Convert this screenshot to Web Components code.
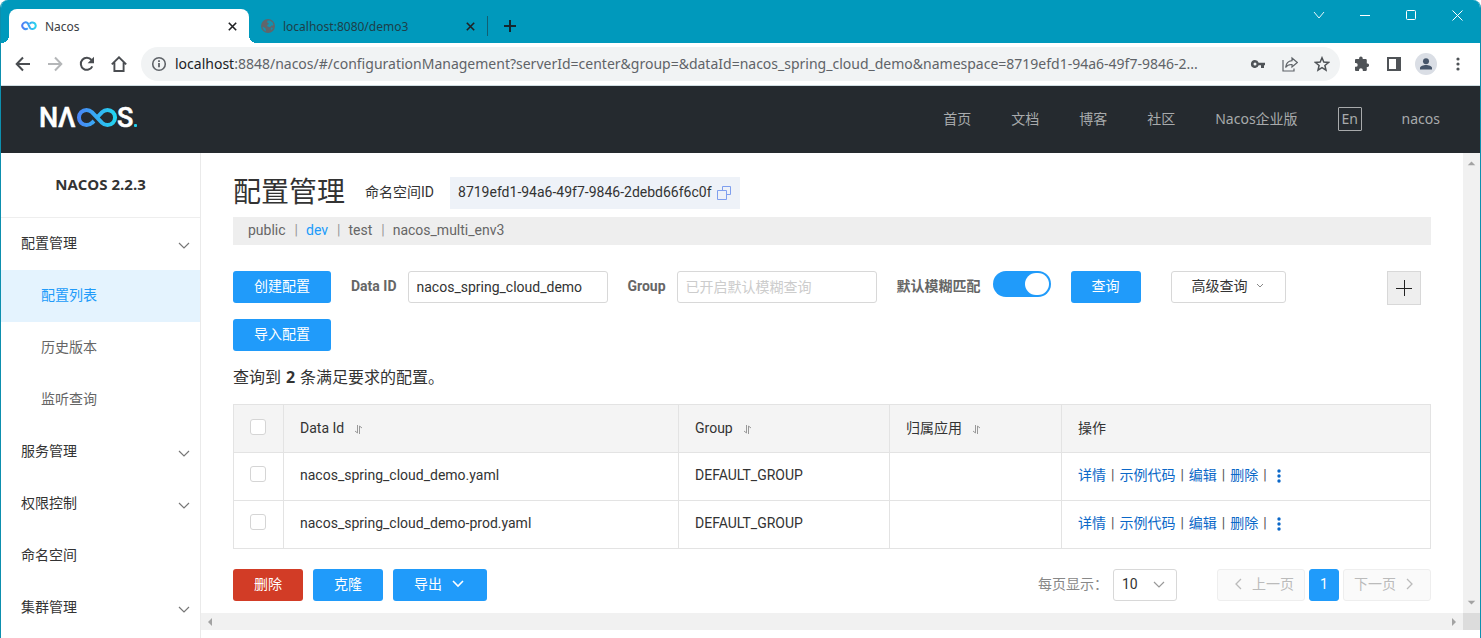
<!DOCTYPE html>
<html lang="zh-CN">
<head>
<meta charset="utf-8">
<meta name="viewport" content="width=device-width, initial-scale=1">
<title>Nacos</title>
<style>
  html, body { margin: 0; }
  body { font-family: Roboto, "Noto Sans CJK SC", sans-serif; font-size: 14px; line-height: 20px; color: #333; }
</style>
</head>
<body>
<browser-window></browser-window>

<script>
const RESET = `*, *::before, *::after { box-sizing: border-box; }
  svg { display: block; flex: none; }
  button, input, select { font: inherit; color: inherit; margin: 0; }
  a { color: inherit; text-decoration: none; }
  [hidden] { display: none; }`;

function define(name, css, html, setup) {
  const template = document.createElement('template');
  template.innerHTML = `<style>${RESET}${css}</style>${html}`;
  customElements.define(name, class extends HTMLElement {
    constructor() {
      super();
      this.attachShadow({ mode: 'open' }).append(template.content.cloneNode(true));
    }
    connectedCallback() {
      if (setup && !this.ready) { this.ready = true; setup(this, this.shadowRoot); }
    }
  });
}

/* ---------- browser frame ---------- */

define('browser-tab', `
  :host { display: flex; align-items: center; height: 34px; padding: 0 12px; color: #1d3f49; font-size: 12px; }
  :host([active]) { background: #fff; border-radius: 8px 8px 0 0; color: #3c4043; }
  :host([active])::before, :host([active])::after { content: ""; width: 8px; height: 8px; align-self: flex-end; flex: none; }
  :host([active])::before { margin-left: -20px; margin-right: 12px; background: radial-gradient(circle at 0 0, transparent 8px, #fff 8px); }
  :host([active])::after { margin-right: -20px; margin-left: 12px; background: radial-gradient(circle at 100% 0, transparent 8px, #fff 8px); }
  .title { flex: 1; margin-left: 8px; padding-top: 2px; white-space: nowrap; }
  button { display: flex; border: 0; padding: 0; background: none; }
`, `
  <slot name="icon"></slot>
  <span class="title"><slot></slot></span>
  <button aria-label="关闭标签页"><svg width="9" height="9" viewBox="0 0 9 9" fill="none" stroke="#202124" stroke-width="1.6"><path d="M.8.8l7.4 7.4M8.2.8L.8 8.2"/></svg></button>
`);

define('tab-strip', `
  :host { display: flex; height: 43px; padding-left: 8px; background: #0099bc; }
  .tabs { display: flex; align-items: flex-end; flex: 1; }
  browser-tab { width: 240px; }
  browser-tab:nth-of-type(2) { width: 238px; }
  .new { height: 34px; display: flex; align-items: center; }
  .new::before { content: ""; width: 1px; height: 20px; background: #125f72; }
  .new button { display: flex; padding: 0 16px; }
  button { border: 0; background: none; }
  .controls { display: flex; height: 30px; }
  .controls button { width: 46px; display: flex; align-items: center; justify-content: center; padding: 0; }
`, `
  <div class="tabs">
    <browser-tab active>
      <svg slot="icon" width="16" height="16" viewBox="0 0 16 16" fill="none" stroke="url(#g)" stroke-width="2"><defs><linearGradient id="g"><stop stop-color="#4d7df5"/><stop offset="1" stop-color="#29d3ee"/></linearGradient></defs><path d="M6.8 10.2A3.3 3.3 0 1 1 6.8 5.2L9.2 10.2M8.7 5.9A3.3 3.3 0 1 1 9.2 10.2"/></svg>
      Nacos
    </browser-tab>
    <browser-tab>
      <svg slot="icon" width="14" height="14" viewBox="0 0 14 14"><circle cx="7" cy="7" r="7" fill="#60656b"/><path fill="#1292b0" d="M1.600 7.400l3 2.200.3 2.800A6 6 0 0 1 1.500 7zM6.500 1.600l2.400-.2 2.800 2.200.8 2.600-2.300.5-1.200 1.600-2.500-.7-.4-1.700 2-1.200-1.900-1.300zM10 8.500l1.900.5-1.700 2.500z"/></svg>
      localhost:8080/demo3
    </browser-tab>
    <div class="new"><button aria-label="新标签页"><svg width="12" height="12" viewBox="0 0 12 12" stroke="#15272e" stroke-width="2"><path d="M6 0v12M0 6h12"/></svg></button></div>
  </div>
  <div class="controls">
    <button aria-label="搜索标签页"><svg width="12" height="12" viewBox="0 0 12 12" fill="none" stroke="#e8f7fa"><path d="M1 3l5 6 5-6"/></svg></button>
    <button aria-label="最小化"><svg width="10" height="10" viewBox="0 0 10 10" stroke="#fff"><path d="M0 5.500h10"/></svg></button>
    <button aria-label="最大化"><svg width="10" height="10" viewBox="0 0 10 10" fill="none" stroke="#fff"><rect x=".5" y=".5" width="9" height="9" rx="1"/></svg></button>
    <button aria-label="关闭"><svg width="11" height="11" viewBox="0 0 11 11" stroke="#fff"><path d="M.5.5l10 10M10.500.5l-10 10"/></svg></button>
  </div>
`);

define('browser-toolbar', `
  :host { display: flex; align-items: center; height: 43px; padding: 0 14px; background: #fff; border-bottom: 1px solid #cfdde2; color: #5f6368; }
  button { display: flex; padding: 0; border: 0; background: none; align-items: center; justify-content: center; width: 16px; height: 24px; flex: none; }
  .nav { display: flex; gap: 16px; margin-right: 14px; }
  .pill { flex: 1; min-width: 0; display: flex; align-items: center; height: 34px; padding: 0 10px; gap: 16px; border-radius: 17px; background: #f1f3f4; }
  .url { flex: 1; min-width: 0; margin-left: -8px; font-size: 14px; line-height: 20px; white-space: nowrap; overflow: hidden; outline: 0; }
  .url b { font-weight: 400; color: #202124; }
  .tools { display: flex; align-items: center; gap: 16px; margin-left: 14px; }
  .avatar { width: 22px; height: 22px; border-radius: 50%; background: #dadee5; margin: 0 -3px; }
`, `
  <div class="nav">
    <button aria-label="后退"><svg width="16" height="16" viewBox="0 0 16 16" fill="none" stroke="#4a4d51" stroke-width="2"><path d="M15 8H2M8 1.500L1.700 8 8 14.500"/></svg></button>
    <button aria-label="前进"><svg width="16" height="16" viewBox="0 0 16 16" fill="none" stroke="#b4b6b8" stroke-width="2"><path d="M1 8h13M8 1.500L14.300 8 8 14.500"/></svg></button>
    <button aria-label="重新加载"><svg width="16" height="16" viewBox="0 0 16 16"><path d="M13.300 10.300A6 6 0 1 1 12.500 4" fill="none" stroke="#4a4d51" stroke-width="2"/><path fill="#4a4d51" d="M15 .8v6.400H8.600z"/></svg></button>
    <button aria-label="主页"><svg width="16" height="16" viewBox="0 0 16 16" fill="none" stroke="#4a4d51" stroke-width="1.900"><path d="M.8 8.400L8 1.300l7.200 7.100M3.400 6.500V15h9.200V6.500"/></svg></button>
  </div>
  <div class="pill">
    <svg width="16" height="16" viewBox="0 0 16 16" fill="none" stroke="#5f6368" stroke-width="1.600"><circle cx="8" cy="8" r="6.300"/><path d="M8 7v4.300M8 4.300v1.700" stroke-width="1.800"/></svg>
    <div class="url" role="textbox" contenteditable="true" spellcheck="false" aria-label="地址"><b>localhost</b>:8848/nacos/#/configurationManagement?serverId=center&amp;group=&amp;dataId=nacos_spring_cloud_demo&amp;namespace=8719efd1-94a6-49f7-9846-2...</div>
    <button aria-label="密码"><svg width="16" height="16" viewBox="0 0 16 16"><path fill="#4f5357" fill-rule="evenodd" d="M5 4a4 4 0 1 0 3.700 5.300H11V12h3V9.300h1V6.700H8.700A4 4 0 0 0 5 4zm0 2.500a1.500 1.500 0 1 1 0 3 1.500 1.500 0 0 1 0-3z"/></svg></button>
    <button aria-label="分享"><svg width="16" height="16" viewBox="0 0 16 16" fill="none" stroke="#5f6368" stroke-width="1.200"><path d="M1 4v11h11v-2.500M10 2l5.300 4.500L10 11V8.500C7 8.300 5.200 9 3.600 11.500 4 7.500 6 5 10 4.600z"/></svg></button>
    <button aria-label="收藏"><svg width="16" height="16" viewBox="0 0 16 16" fill="none" stroke="#4f5357" stroke-width="1.500"><path d="M8 1.800l1.800 4.300 4.700.4-3.600 3 1.100 4.600L8 11.700l-4 2.400 1.100-4.600-3.600-3 4.700-.4z"/></svg></button>
  </div>
  <div class="tools">
    <button aria-label="扩展程序"><svg width="16" height="16" viewBox="0 0 16 16" fill="#4f5357"><path d="M13.700 7.500h-.9V4.300c0-.8-.6-1.300-1.300-1.300H8.700v-.8a1.800 1.800 0 0 0-3.600 0V3H2.200C1.500 3 1 3.500 1 4.300V7h.8a1.900 1.900 0 0 1 0 3.800H1v2.900c0 .7.500 1.300 1.200 1.300H5v-.9a1.900 1.900 0 0 1 3.800 0v.9h2.700c.7 0 1.300-.6 1.300-1.300V11h.9a1.800 1.800 0 0 0 0-3.500z"/></svg></button>
    <button aria-label="侧边栏"><svg width="14" height="14" viewBox="0 0 14 14"><path fill="#4f5357" fill-rule="evenodd" d="M0 0h14v14H0zM2 2v10h7V2z"/></svg></button>
    <button class="avatar" aria-label="个人资料"><svg width="14" height="14" viewBox="0 0 14 14" fill="#46556a"><circle cx="7" cy="4.200" r="3"/><path d="M1 12.500V11c0-2 3.500-3 6-3s6 1 6 3v1.500z"/></svg></button>
    <button aria-label="菜单"><svg width="4" height="14" viewBox="0 0 4 14" fill="#4f5357"><circle cx="2" cy="2" r="1.600"/><circle cx="2" cy="7" r="1.600"/><circle cx="2" cy="12" r="1.600"/></svg></button>
  </div>
`);

define('scroll-bar', `
  :host { display: flex; flex: none; justify-content: space-between; align-items: center; background: #f1f1f1; color: #a3a3a3; padding: 0 6px; height: 17px; }
  :host([vertical]) { flex-direction: column; width: 17px; height: auto; padding: 6px 0; }
  :host([vertical]) svg { transform: rotate(90deg); }
`, `
  <svg width="5" height="8" viewBox="0 0 5 8" fill="currentColor"><path d="M5 0v8L1 4z"/></svg>
  <svg width="5" height="8" viewBox="0 0 5 8" fill="currentColor"><path d="M0 0v8l4-4z"/></svg>
`);

/* ---------- console ---------- */

define('nacos-logo', `
  :host { display: block; }
  text { font: 500 27px Roboto, sans-serif; fill: #fff; stroke: #fff; stroke-width: .5px; }
`, `
  <svg width="108" height="35" viewBox="0 0 108 35" role="img" aria-label="Nacos">
    <defs><linearGradient id="loop" gradientUnits="userSpaceOnUse" x1="41" y1="0" x2="81" y2="0"><stop stop-color="#4b83f6"/><stop offset="1" stop-color="#20d8f0"/></linearGradient></defs>
    <text x="3" y="25">N</text><text x="22" y="25">Λ</text><text x="81" y="25">S</text>
    <path d="M58 19L55.900 20.900A7.600 7.600 0 1 1 55.900 10.100L66.100 20.900A7.600 7.600 0 1 0 66.100 10.100L61.500 15" fill="none" stroke="url(#loop)" stroke-width="4"/>
    <rect x="98" y="22" width="3" height="3" rx="1" fill="#20d0ee"/>
  </svg>
`);

define('site-header', `
  :host { display: flex; align-items: center; justify-content: space-between; height: 67px; padding: 0 40px 0 35px; background: #252a2f; color: #a8aaac; font-family: "Noto Sans", "Noto Sans CJK SC", sans-serif; }
  nav { display: flex; align-items: center; gap: 40px; padding-bottom: 2px; }
  button { width: 24px; height: 24px; padding: 0; line-height: 20px; border: 1px solid #a8aaac; border-radius: 1px; background: none; color: inherit; }
`, `
  <nacos-logo></nacos-logo>
  <nav>
    <a href="#home">首页</a><a href="#docs">文档</a><a href="#blog">博客</a><a href="#community">社区</a><a href="#enterprise">Nacos企业版</a>
    <button>En</button>
    <a href="#user">nacos</a>
  </nav>
`);

define('menu-item', `
  :host { display: block; }
  a { display: flex; align-items: center; justify-content: space-between; height: 52px; padding: 0 10px 2px 20px; }
  :host([sub]) a { padding-left: 40px; color: #666; }
  :host([selected]) a { background: #e4f3fe; color: #209bfa; }
  svg { display: none; margin-top: 6px; }
  :host([expandable]) svg { display: block; }
`, `
  <a href="#menu"><span><slot></slot></span><svg width="12" height="8" viewBox="0 0 12 8" fill="none" stroke="#777" stroke-width="1.200"><path d="M1 1l5 5 5-5"/></svg></a>
`);

define('side-menu', `
  :host { display: block; width: 200px; flex: none; border-right: 1px solid #eaeaea; background: #fff; }
  h1 { margin: 0; height: 65px; border-bottom: 1px solid #eee; font: 700 15px/62px "Open Sans", sans-serif; text-align: center; }
`, `
  <h1>NACOS 2.2.3</h1>
  <menu-item expandable>配置管理</menu-item>
  <menu-item sub selected>配置列表</menu-item>
  <menu-item sub>历史版本</menu-item>
  <menu-item sub>监听查询</menu-item>
  <menu-item expandable>服务管理</menu-item>
  <menu-item expandable>权限控制</menu-item>
  <menu-item>命名空间</menu-item>
  <menu-item expandable>集群管理</menu-item>
`);

define('ui-button', `
  :host { display: block; }
  button { display: flex; align-items: center; justify-content: center; gap: 10px; height: 32px; padding: 0 20px 2px; border: 1px solid #209bfa; border-radius: 3px; background: #209bfa; color: #fff; white-space: nowrap; }
  :host(:not([kind])) button, :host([kind=danger]) button { border: 0; padding: 0 21px 2px; }
  :host([kind=danger]) button { background: #d23c26; }
  :host([kind=plain]) button { background: #fff; border-color: #d8d8d8; color: #333; gap: 8px; padding: 0 21px 2px 20px; }
  :host([kind=pager]) button { background: #fafafa; border-color: #eee; color: #bbb; padding: 0 10px 2px 16px; }
  :host([kind=pager]:last-of-type) button { padding: 0 16px 2px 10px; }
  :host([kind=current]) button { width: 30px; padding: 0 0 2px; }
`, `<button><slot></slot></button>`);

define('form-field', `
  :host { display: flex; align-items: center; gap: 11px; }
  label { font-weight: 700; color: #666; line-height: 30px; padding-bottom: 2px; white-space: nowrap; }
  input { width: 200px; height: 32px; padding: 0 8px; border: 1px solid #d8d8d8; border-radius: 3px; background: #fff; outline: 0; }
  input::placeholder { color: #ccc; opacity: 1; }
`, `<label for="field"></label><input id="field" type="text">`, (host, root) => {
  root.querySelector('label').textContent = host.getAttribute('label');
  const input = root.querySelector('input');
  input.value = host.getAttribute('value') || '';
  input.placeholder = host.getAttribute('placeholder') || '';
});

define('switch-field', `
  :host { display: flex; align-items: flex-start; gap: 12px; }
  label { font-weight: 700; color: #666; line-height: 30px; white-space: nowrap; }
  input { appearance: none; width: 58px; height: 26px; border-radius: 13px; background: #209bfa; display: flex; justify-content: flex-end; padding: 2px; }
  input::before { content: ""; width: 24px; height: 22px; border-radius: 11px; background: #fff; }
`, `<label for="toggle"><slot></slot></label><input id="toggle" type="checkbox" role="switch" checked>`);

define('page-title', `
  :host { display: flex; align-items: center; height: 32px; }
  h2 { margin: 0 20px 0 0; font-size: 28px; font-weight: 400; line-height: 32px; }
  .name { padding-bottom: 2px; }
  .id { margin-left: 16px; height: 32px; display: flex; align-items: center; gap: 4px; padding: 0 8px; background: #eef2f8; }
  .id span { padding-bottom: 2px; }
  button { display: flex; padding: 0; border: 0; background: none; }
`, `
  <h2>配置管理</h2>
  <span class="name">命名空间ID</span>
  <div class="id"><span>8719efd1-94a6-49f7-9846-2debd66f6c0f</span>
    <button aria-label="复制"><svg width="16" height="16" viewBox="0 0 16 16" fill="none" stroke="#7f9fee"><path d="M1.500 5.500h9v9h-9zM6.500 5V1.500h8v8H11"/></svg></button></div>
`);

define('namespace-tabs', `
  :host { display: flex; align-items: center; height: 28px; padding: 0 15px 2px; background: #eee; color: #666; }
  a + a::before { content: "|"; color: #999; margin: 0 8px 0 9px; }
  .on { color: #209bfa; }
`, `<a href="#public">public</a><a class="on" href="#dev">dev</a><a href="#test">test</a><a href="#env3">nacos_multi_env3</a>`);

define('filter-bar', `
  :host { display: flex; flex-wrap: wrap; align-items: flex-start; gap: 16px 20px; }
  .advanced { margin-left: 10px; }
  .add { display: flex; align-items: center; justify-content: center; width: 34px; height: 34px; margin: 0 10px -2px auto; padding: 0; border: 1px solid #d8d8d8; background: #eee; }
`, `
  <ui-button>创建配置</ui-button>
  <form-field label="Data ID" value="nacos_spring_cloud_demo"></form-field>
  <form-field label="Group" placeholder="已开启默认模糊查询"></form-field>
  <switch-field>默认模糊匹配</switch-field>
  <ui-button>查询</ui-button>
  <ui-button class="advanced" kind="plain">高级查询<svg width="8" height="6" viewBox="0 0 8 6" fill="none" stroke="#888"><path d="M1 1l3 3 3-3"/></svg></ui-button>
  <button class="add" aria-label="添加"><svg width="16" height="16" viewBox="0 0 16 16" stroke="#222"><path d="M8.500 0v16M0 8.500h16"/></svg></button>
  <ui-button>导入配置</ui-button>
`);

const HEAD = label => `<th><div class="head">${label}<button aria-label="排序"><svg width="9" height="9" viewBox="0 0 9 9" fill="none" stroke="#999"><path d="M3.500 0v8L1 6M5.500 9V1l2.500 2"/></svg></button></div></th>`;
const CHECK = label => `<input type="checkbox" aria-label="${label}">`;
const ROW = id => `<tr><td>${CHECK(id)}</td><td>${id}</td><td>DEFAULT_GROUP</td><td></td><td><div class="ops">
  <a href="#detail">详情</a><i>|</i><a href="#sample">示例代码</a><i>|</i><a href="#edit">编辑</a><i>|</i><a href="#delete">删除</a><i>|</i>
  <button aria-label="更多"><svg width="4" height="14" viewBox="0 0 4 14" fill="#0b68c8"><circle cx="2" cy="2" r="1.700"/><circle cx="2" cy="7" r="1.700"/><circle cx="2" cy="12" r="1.700"/></svg></button></div></td></tr>`;

define('config-table', `
  :host { display: block; }
  table { width: 100%; table-layout: fixed; border-collapse: collapse; }
  th, td { height: 48px; padding: 0 16px 4px; border: 1px solid #e3e3e3; font-weight: 400; text-align: left; }
  th { background: #f4f4f4; padding-bottom: 2px; }
  .pick { width: 50px; } .id { width: 33%; } .group { width: 211px; } .app { width: 172px; }
  input { appearance: none; display: block; width: 16px; height: 16px; border: 1px solid #d5d5d5; border-radius: 3px; background: #fff; margin-top: -2px; }
  .head { display: flex; align-items: center; gap: 10px; }
  .head button { display: flex; border: 0; background: none; padding: 4px 0 0; }
  .ops { display: flex; align-items: center; color: #0b68c8; }
  .ops i { font-style: normal; color: #555; margin: 0 5px; }
  .ops button { display: flex; padding: 2px 0 0; border: 0; background: none; margin-left: 5px; }
`, `
  <table>
    <colgroup><col class="pick"><col class="id"><col class="group"><col class="app"><col></colgroup>
    <thead><tr><th>${CHECK('全选')}</th>${HEAD('Data Id')}${HEAD('Group')}${HEAD('归属应用')}<th>操作</th></tr></thead>
    <tbody>${ROW('nacos_spring_cloud_demo.yaml')}${ROW('nacos_spring_cloud_demo-prod.yaml')}</tbody>
  </table>
`);

define('table-footer', `
  :host { display: flex; align-items: center; justify-content: space-between; }
  div { display: flex; align-items: center; }
  .batch { gap: 10px; }
  .batch svg { margin-right: 2px; }
  .pages { gap: 4px; }
  label { color: #888; padding-bottom: 2px; margin-right: -3px; }
  .select { display: grid; margin: 0 36px 0 4px; }
  .select > * { grid-area: 1 / 1; }
  select { appearance: none; width: 64px; height: 32px; padding: 0 8px 2px; border: 1px solid #d8d8d8; border-radius: 3px; background: #fff; }
  .select svg { justify-self: end; margin-right: 12px; pointer-events: none; }
`, `
  <div class="batch">
    <ui-button kind="danger">删除</ui-button><ui-button>克隆</ui-button>
    <ui-button>导出<svg width="12" height="8" viewBox="0 0 12 8" fill="none" stroke="#fff" stroke-width="1.600"><path d="M1 1l5 5 5-5"/></svg></ui-button>
  </div>
  <div class="pages">
    <label for="size">每页显示：</label>
    <div class="select"><select id="size"><option>10</option><option>20</option><option>50</option></select><svg width="12" height="8" viewBox="0 0 12 8" fill="none" stroke="#999" stroke-width="1.200"><path d="M1 1l5 5 5-5"/></svg></div>
    <ui-button kind="pager"><svg width="8" height="12" viewBox="0 0 8 12" fill="none" stroke="#bbb" stroke-width="1.300"><path d="M7 1L2 6l5 5"/></svg>上一页</ui-button>
    <ui-button kind="current">1</ui-button>
    <ui-button kind="pager">下一页<svg width="8" height="12" viewBox="0 0 8 12" fill="none" stroke="#bbb" stroke-width="1.300"><path d="M1 1l5 5-5 5"/></svg></ui-button>
  </div>
`);

define('config-page', `
  :host { display: block; padding: 24px 32px 12px; }
  namespace-tabs { margin: 8px 0 26px; }
  p { margin: 14px 0; font-size: 16px; line-height: 24px; }
  b { font-family: "Open Sans", sans-serif; margin: 0 1px; }
  table-footer { margin-top: 20px; }
`, `
  <page-title></page-title>
  <namespace-tabs></namespace-tabs>
  <filter-bar></filter-bar>
  <p>查询到 <b>2</b> 条满足要求的配置。</p>
  <config-table></config-table>
  <table-footer></table-footer>
`);

define('browser-window', `
  :host { display: flex; flex-direction: column; min-height: 100vh; border: solid #0d8fae; border-width: 0 1px; border-radius: 8px 8px 0 0; overflow: hidden; background: #fff; }
  tab-strip, browser-toolbar { font-family: "Noto Sans", sans-serif; }
  .body { flex: 1; display: flex; }
  .view { flex: 1; min-width: 0; display: grid; grid-template: 1fr 17px / minmax(0, 1fr) 17px; padding-bottom: 8px; }
  .corner { background: #dcdcdc; }
`, `
  <tab-strip></tab-strip>
  <browser-toolbar></browser-toolbar>
  <site-header></site-header>
  <div class="body">
    <side-menu></side-menu>
    <div class="view">
      <config-page></config-page><scroll-bar vertical></scroll-bar>
      <scroll-bar></scroll-bar><div class="corner"></div>
    </div>
  </div>
`);
</script>
</body>
</html>
